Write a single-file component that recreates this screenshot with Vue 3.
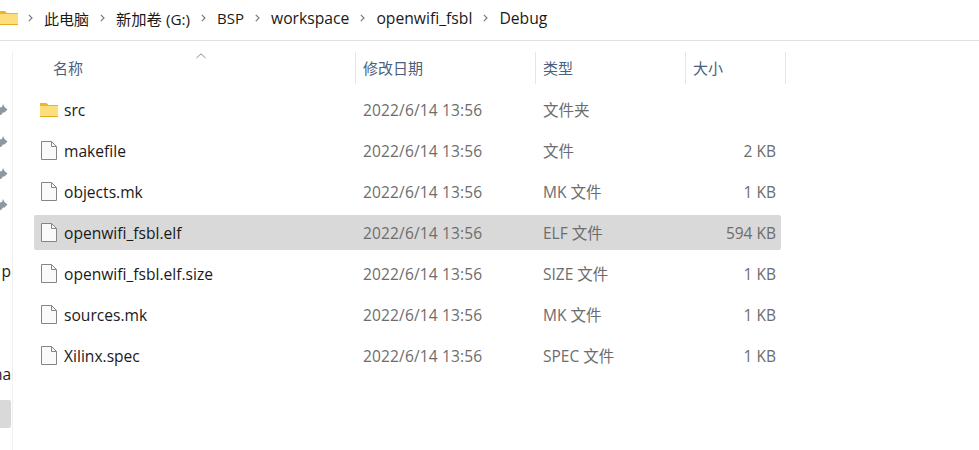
<script setup>
const crumbs = [
  { text: '此电脑', cls: 'cjk' },
  { text: '新加卷 (G:)', cls: 'mixed' },
  { text: 'BSP', cls: 'cjk' },
  { text: 'workspace' },
  { text: 'openwifi_fsbl' },
  { text: 'Debug' }
]

const columns = ['名称', '修改日期', '类型', '大小']

const files = [
  { name: 'src', type: '文件夹', size: '', folder: true },
  { name: 'makefile', type: '文件', size: '2 KB' },
  { name: 'objects.mk', type: 'MK 文件', size: '1 KB' },
  { name: 'openwifi_fsbl.elf', type: 'ELF 文件', size: '594 KB', selected: true },
  { name: 'openwifi_fsbl.elf.size', type: 'SIZE 文件', size: '1 KB' },
  { name: 'sources.mk', type: 'MK 文件', size: '1 KB' },
  { name: 'Xilinx.spec', type: 'SPEC 文件', size: '1 KB' }
]
</script>

<template>
  <div class="explorer">
    <div class="address">
      <svg class="addr-folder" width="18" height="14" viewBox="0 0 18 14">
        <path d="M-4 0h9l2 2h11v12H-4z" fill="#f0b429" />
        <path d="M-4 3h22v11H-4z" fill="#fcdf7c" />
        <path d="M-4 13h22v1H-4z" fill="#e6aa26" />
      </svg>
      <template v-for="c in crumbs" :key="c.text">
        <svg class="chev" width="5" height="8" viewBox="0 0 5 8">
          <path d="M0.8 0.8 4 4 0.8 7.2" fill="none" stroke="#7a7a7a" stroke-width="1.2" />
        </svg>
        <span class="crumb" :class="c.cls">{{ c.text }}</span>
      </template>
    </div>

    <div class="body">
      <aside class="side">
        <svg v-for="n in 4" :key="n" class="pin" width="8" height="12" viewBox="0 0 8 12">
          <path d="M3 0 4.5 3 7.5 5.5 4.5 8.5 3 8.5 1 11 0 11 0 3.5 2 3z" fill="#8d999f" />
        </svg>
        <span class="side-text st-p">p</span>
        <span class="side-text st-na">na</span>
        <div class="side-sel"></div>
      </aside>

      <main class="list">
        <div class="head">
          <svg class="sort" width="10" height="6" viewBox="0 0 10 6">
            <path d="M0.5 5 5 0.8 9.5 5" fill="none" stroke="#8a8a8a" />
          </svg>
          <div v-for="c in columns" :key="c" class="hcell">{{ c }}</div>
        </div>

        <div v-for="f in files" :key="f.name" class="row" :class="{ selected: f.selected }">
          <div class="cell name">
            <svg v-if="f.folder" class="icon" width="20" height="16" viewBox="0 0 20 16">
              <path d="M1 1h6.5l2 2H19V15H1z" fill="#f0b429" />
              <path d="M1 4h18V15H1z" fill="#fcdf7c" />
              <path d="M1 14h18v1H1z" fill="#e6aa26" />
            </svg>
            <svg v-else class="icon" width="20" height="21" viewBox="0 0 20 21">
              <path d="M2.5 1.5h10l5 5v13h-15z" fill="#fafafa" stroke="#858585" />
              <path d="M12.5 1.5v5h5" fill="none" stroke="#858585" />
            </svg>
            <span class="fname">{{ f.name }}</span>
          </div>
          <div class="cell date">2022/6/14 13:56</div>
          <div class="cell type">{{ f.type }}</div>
          <div class="cell size">{{ f.size }}</div>
        </div>
      </main>
    </div>
  </div>
</template>

<style scoped>
.explorer {
  width: 979px;
  height: 450px;
  overflow: hidden;
  background: #fff;
  font-family: "Open Sans", "Noto Sans CJK SC", sans-serif;
  font-size: 15.5px;
}

.address {
  height: 41px;
  box-sizing: border-box;
  display: flex;
  align-items: center;
  border-bottom: 1px solid #e1e1e1;
  padding-bottom: 4px;
  color: #1a1a1a;
}

.addr-folder {
  flex: none;
}

.chev {
  flex: none;
  margin: 0 11px 0 10px;
}

.crumb {
  font-size: 15.7px;
  white-space: nowrap;
}

.crumb.cjk {
  font-size: 15px;
}

.crumb.mixed {
  font-size: 15.3px;
}

.crumb ~ .chev {
  margin-left: 11px;
}

.body {
  display: flex;
  height: 409px;
}

.side {
  position: relative;
  width: 13px;
  height: 399px;
  margin-top: 10px;
  box-sizing: border-box;
  border-right: 1px solid #f0f0f0;
  flex: none;
  overflow: hidden;
}

.pin {
  position: absolute;
  left: 0;
}

.pin:nth-of-type(1) { top: 53px; }
.pin:nth-of-type(2) { top: 85px; }
.pin:nth-of-type(3) { top: 117px; }
.pin:nth-of-type(4) { top: 148px; }

.side-text {
  position: absolute;
  right: 1px;
  color: #1a1a1a;
}

.st-p { top: 209px; }
.st-na { top: 312px; }

.side-sel {
  position: absolute;
  left: 0;
  top: 349px;
  width: 11px;
  height: 28px;
  background: #d9d9d9;
  border-radius: 0 2px 2px 0;
}

.list {
  flex: 1;
  padding: 11px 0 0 21px;
}

.head {
  position: relative;
  display: grid;
  grid-template-columns: 322px 180px 150px 100px;
  height: 32px;
  margin-bottom: 8px;
  color: #4c607a;
}

.sort {
  position: absolute;
  left: 162px;
  top: 1px;
}

.hcell {
  border-right: 1px solid #e6e6e6;
  padding-left: 19px;
  line-height: 32px;
  font-size: 15px;
  box-sizing: border-box;
}

.hcell:nth-of-type(n + 2) {
  padding-left: 7px;
}

.row {
  display: grid;
  grid-template-columns: 322px 180px 150px 90px;
  width: 747px;
  height: 35px;
  margin-bottom: 6px;
  align-items: center;
  border-radius: 2px;
  color: #6d6d6d;
}

.row.selected {
  background: #d9d9d9;
}

.cell {
  white-space: nowrap;
}

.name {
  display: flex;
  align-items: center;
  padding-left: 5px;
  color: #1a1a1a;
}

.icon {
  flex: none;
}

.fname {
  margin-left: 5px;
  font-size: 15.6px;
}

.date,
.type {
  padding-left: 7px;
}

.date {
  letter-spacing: 0.15px;
}

.size {
  text-align: right;
}
</style>
